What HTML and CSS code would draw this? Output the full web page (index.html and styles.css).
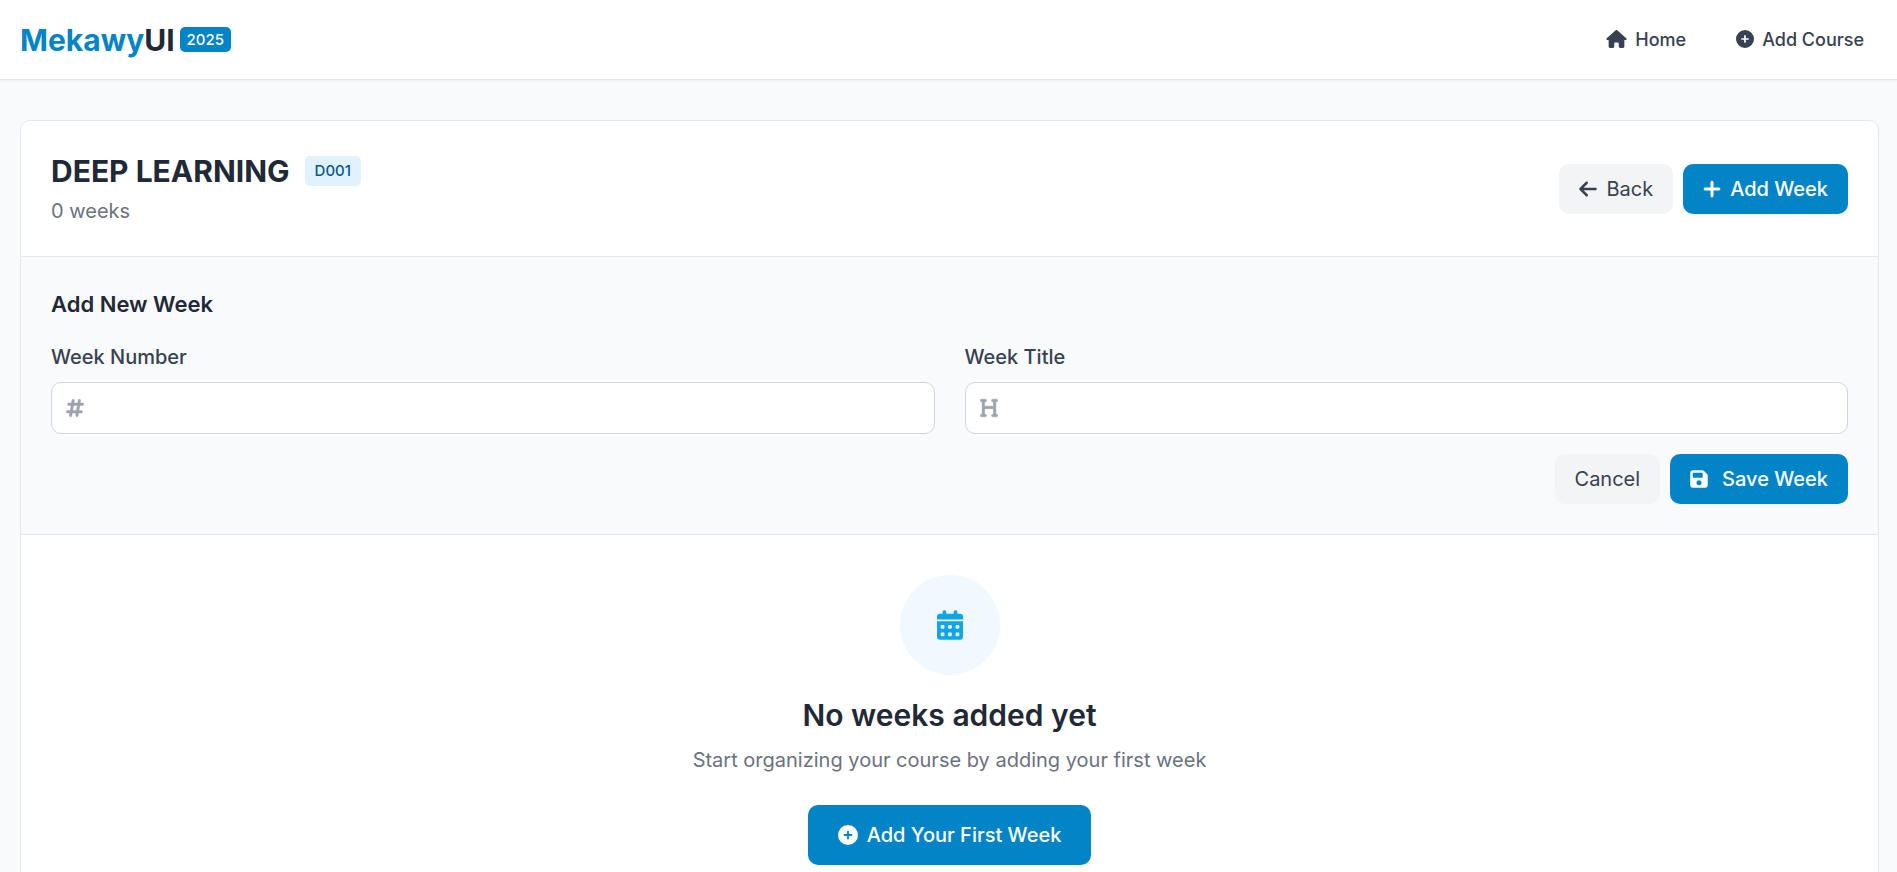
FILE: index.html
```html
<!DOCTYPE html>
<html lang="en">
<head>
<meta charset="utf-8">
<meta name="viewport" content="width=device-width, initial-scale=1">
<title>DEEP LEARNING - MekawyUI</title>
<link rel="stylesheet" href="styles.css">
</head>
<body>
<svg class="sprite" aria-hidden="true">
  <symbol id="i-plus" viewBox="0 0 448 512"><path d="M256 80c0-17.7-14.3-32-32-32s-32 14.3-32 32V224H48c-17.7 0-32 14.3-32 32s14.3 32 32 32H192V432c0 17.7 14.3 32 32 32s32-14.3 32-32V288H400c17.7 0 32-14.3 32-32s-14.3-32-32-32H256V80z" stroke="currentColor" stroke-width="12"/></symbol>
  <symbol id="i-arrow-left" viewBox="0 0 448 512"><path d="M9.4 233.4c-12.5 12.5-12.5 32.8 0 45.3l160 160c12.5 12.5 32.8 12.5 45.3 0s12.5-32.8 0-45.3L109.2 288 416 288c17.7 0 32-14.3 32-32s-14.3-32-32-32l-306.7 0L214.6 118.6c12.5-12.5 12.5-32.8 0-45.3s-32.8-12.5-45.3 0l-160 160z"/></symbol>
  <symbol id="i-circle-plus" viewBox="0 0 512 512"><path d="M256 512A256 256 0 1 0 256 0a256 256 0 1 0 0 512zM232 344V280H168c-13.3 0-24-10.7-24-24s10.7-24 24-24h64V168c0-13.3 10.7-24 24-24s24 10.7 24 24v64h64c13.3 0 24 10.7 24 24s-10.7 24-24 24H280v64c0 13.3-10.7 24-24 24s-24-10.7-24-24z"/></symbol>
  <symbol id="i-house" viewBox="0 0 576 512"><path d="M575.8 255.5c0 18-15 32.1-32 32.1h-32l.7 160.2c0 2.7-.2 5.4-.5 8.1V472c0 22.1-17.9 40-40 40H456c-1.1 0-2.2 0-3.3-.1c-1.4 .1-2.8 .1-4.2 .1H416 392c-22.1 0-40-17.9-40-40V448 384c0-17.7-14.3-32-32-32H256c-17.7 0-32 14.3-32 32v64 24c0 22.1-17.9 40-40 40H160 128.1c-1.5 0-3-.1-4.5-.2c-1.2 .1-2.4 .2-3.6 .2H104c-22.1 0-40-17.9-40-40V360c0-.9 0-1.9 .1-2.8V287.6H32c-18 0-32-14-32-32.1c0-9 3-17 10-24L266.4 8c7-7 15-8 22-8s15 2 21 7L564.8 231.5c8 7 12 15 11 24z"/></symbol>
  <symbol id="i-floppy" viewBox="0 0 448 512"><path d="M64 32C28.7 32 0 60.7 0 96V416c0 35.3 28.7 64 64 64H384c35.3 0 64-28.7 64-64V173.3c0-17-6.7-33.3-18.7-45.3L352 50.7C340 38.7 323.7 32 306.7 32H64zm0 96c0-17.7 14.3-32 32-32H288c17.7 0 32 14.3 32 32v64c0 17.7-14.3 32-32 32H96c-17.7 0-32-14.3-32-32V128zM224 288a64 64 0 1 1 0 128 64 64 0 1 1 0-128z"/></symbol>
  <symbol id="i-hashtag" viewBox="0 0 448 512"><path d="M181.3 32.4c17.4 2.9 29.2 19.4 26.3 36.8L197.8 128h95.1l11.5-69.3c2.9-17.4 19.4-29.2 36.8-26.3s29.2 19.4 26.3 36.8L357.8 128H416c17.7 0 32 14.3 32 32s-14.3 32-32 32H347.1L325.8 320H384c17.7 0 32 14.3 32 32s-14.3 32-32 32H315.1l-11.5 69.3c-2.9 17.4-19.4 29.2-36.8 26.3s-29.2-19.4-26.3-36.8l9.8-58.7H155.1l-11.5 69.3c-2.9 17.4-19.4 29.2-36.8 26.3s-29.2-19.4-26.3-36.8L90.2 384H32c-17.7 0-32-14.3-32-32s14.3-32 32-32h68.9l21.3-128H64c-17.7 0-32-14.3-32-32s14.3-32 32-32h68.9l11.5-69.3c2.9-17.4 19.4-29.2 36.8-26.3zM187.1 192L165.8 320h95.1l21.3-128H187.1z" stroke="currentColor" stroke-width="12"/></symbol>
  <symbol id="i-heading" viewBox="0 0 448 512"><path d="M0 64C0 46.3 14.3 32 32 32H80h48c17.7 0 32 14.3 32 32s-14.3 32-32 32H112V208H336V96H320c-17.7 0-32-14.3-32-32s14.3-32 32-32h48 48c17.7 0 32 14.3 32 32s-14.3 32-32 32H400V240 416h16c17.7 0 32 14.3 32 32s-14.3 32-32 32H368 320c-17.7 0-32-14.3-32-32s14.3-32 32-32h16V272H112V416h16c17.7 0 32 14.3 32 32s-14.3 32-32 32H80 32c-17.7 0-32-14.3-32-32s14.3-32 32-32H48V240 96H32C14.3 96 0 81.7 0 64z" stroke="currentColor" stroke-width="12"/></symbol>
  <symbol id="i-calendar" viewBox="0 0 448 512"><path d="M128 0c17.7 0 32 14.3 32 32V64H288V32c0-17.7 14.3-32 32-32s32 14.3 32 32V64h48c26.5 0 48 21.5 48 48v48H0V112C0 85.5 21.5 64 48 64H96V32c0-17.7 14.3-32 32-32zM0 192H448V464c0 26.5-21.5 48-48 48H48c-26.5 0-48-21.5-48-48V192zm64 80v32c0 8.8 7.2 16 16 16h32c8.8 0 16-7.2 16-16V272c0-8.8-7.2-16-16-16H80c-8.8 0-16 7.2-16 16zm128 0v32c0 8.8 7.2 16 16 16h32c8.8 0 16-7.2 16-16V272c0-8.8-7.2-16-16-16H208c-8.8 0-16 7.2-16 16zm144-16c-8.8 0-16 7.2-16 16v32c0 8.8 7.2 16 16 16h32c8.8 0 16-7.2 16-16V272c0-8.8-7.2-16-16-16H336zM64 400v32c0 8.8 7.2 16 16 16h32c8.8 0 16-7.2 16-16V400c0-8.8-7.2-16-16-16H80c-8.8 0-16 7.2-16 16zm144-16c-8.8 0-16 7.2-16 16v32c0 8.8 7.2 16 16 16h32c8.8 0 16-7.2 16-16V400c0-8.8-7.2-16-16-16H208zm112 16v32c0 8.8 7.2 16 16 16h32c8.8 0 16-7.2 16-16V400c0-8.8-7.2-16-16-16H336c-8.8 0-16 7.2-16 16z"/></symbol>
</svg>

<header class="navbar">
  <a class="brand" href="#">
    <span class="brand-name"><span class="brand-accent">Mekawy</span>UI</span>
    <span class="brand-year">2025</span>
  </a>
  <nav class="nav-links">
    <a class="nav-link" href="#"><svg class="icon-house"><use href="#i-house"/></svg>Home</a>
    <a class="nav-link" href="#"><svg class="icon-circle"><use href="#i-circle-plus"/></svg>Add Course</a>
  </nav>
</header>

<main class="page">
  <div class="card">
    <section class="course-head">
      <div>
        <div class="title-row">
          <h1 class="title">DEEP LEARNING</h1>
          <span class="code">D001</span>
        </div>
        <p class="count">0 weeks</p>
      </div>
      <div class="actions">
        <a class="btn btn-muted" href="#"><svg class="icon"><use href="#i-arrow-left"/></svg>Back</a>
        <button class="btn btn-primary" type="button"><svg class="icon"><use href="#i-plus"/></svg>Add Week</button>
      </div>
    </section>

    <form class="week-form">
      <h2 class="form-title">Add New Week</h2>
      <div class="fields">
        <div class="field">
          <label class="label" for="week-number">Week Number</label>
          <div class="control">
            <svg class="icon control-icon"><use href="#i-hashtag"/></svg>
            <input class="input" id="week-number" type="number">
          </div>
        </div>
        <div class="field">
          <label class="label" for="week-title">Week Title</label>
          <div class="control">
            <svg class="icon control-icon"><use href="#i-heading"/></svg>
            <input class="input" id="week-title" type="text">
          </div>
        </div>
      </div>
      <div class="actions form-actions">
        <button class="btn btn-muted" type="button">Cancel</button>
        <button class="btn btn-primary btn-save" type="submit"><svg class="icon"><use href="#i-floppy"/></svg>Save Week</button>
      </div>
    </form>

    <section class="empty">
      <div class="empty-badge"><svg class="icon-calendar"><use href="#i-calendar"/></svg></div>
      <h2 class="empty-title">No weeks added yet</h2>
      <p class="empty-text">Start organizing your course by adding your first week</p>
      <button class="btn btn-primary btn-large" type="button"><svg class="icon-plus-large"><use href="#i-circle-plus"/></svg>Add Your First Week</button>
    </section>
  </div>
</main>
</body>
</html>
```

FILE: styles.css
```css
* {
  box-sizing: border-box;
}

body {
  margin: 0;
  background: #f9fafb;
  color: #1f2937;
  font-family: Inter, "Liberation Sans", sans-serif;
  font-size: 20px;
  line-height: 30px;
  scrollbar-width: none;
}

h1, h2, p {
  margin: 0;
}

a {
  color: inherit;
  text-decoration: none;
}

svg {
  flex: none;
  fill: currentColor;
}

.sprite {
  position: absolute;
  width: 0;
  height: 0;
}

.icon {
  width: 18px;
  height: 20px;
}

.icon-house {
  width: 21px;
  height: 20px;
  padding-bottom: 2px;
}

.icon-circle {
  width: 18px;
  height: 20px;
  padding-bottom: 2px;
}

.icon-plus-large {
  width: 20px;
  height: 20px;
}

.icon-calendar {
  width: 26px;
  height: 30px;
}

.navbar {
  display: flex;
  align-items: center;
  justify-content: space-between;
  height: 80px;
  padding: 0 18px 0 20px;
  background: #fff;
  border-bottom: 1px solid #e5e7eb;
  box-shadow: 0 1px 2px rgba(0, 0, 0, 0.05);
}

.brand {
  display: flex;
  align-items: center;
  gap: 5px;
}

.brand-name {
  font-size: 30px;
  font-weight: 700;
  line-height: 40px;
}

.brand-accent {
  color: #0284c7;
}

.brand-year {
  padding: 2px 7px;
  border-radius: 5px;
  background: #0284c7;
  color: #fff;
  font-size: 15px;
  font-weight: 500;
  line-height: 21px;
}

.nav-links {
  display: flex;
  gap: 20px;
}

.nav-link {
  display: flex;
  align-items: center;
  gap: 8px;
  padding: 10px 15px;
  color: #374151;
  font-size: 18px;
  font-weight: 500;
  line-height: 25px;
}

.page {
  padding: 40px 18px 40px 20px;
}

.card {
  overflow: hidden;
  background: #fff;
  border: 1px solid #e5e7eb;
  border-radius: 10px;
}

.course-head {
  display: flex;
  align-items: center;
  justify-content: space-between;
  padding: 30px;
  border-bottom: 1px solid #e5e7eb;
}

.title-row {
  display: flex;
  align-items: center;
  gap: 15px;
}

.title {
  font-size: 30px;
  font-weight: 700;
  line-height: 40px;
}

.code {
  padding: 5px 10px;
  border-radius: 5px;
  background: #e0f2fe;
  color: #075985;
  font-size: 15px;
  font-weight: 500;
  line-height: 20px;
}

.count {
  margin-top: 5px;
  color: #6b7280;
}

.actions {
  display: flex;
  gap: 10px;
}

.btn {
  display: inline-flex;
  align-items: center;
  gap: 9px;
  padding: 10px 20px;
  border: 0;
  border-radius: 10px;
  font: inherit;
  cursor: pointer;
}

.btn-muted {
  background: #f3f4f6;
  color: #374151;
}

.btn-primary {
  background: #0284c7;
  color: #fff;
  font-weight: 500;
}

.btn-save {
  gap: 14px;
}

.btn-large {
  padding: 15px 30px;
}

.week-form {
  padding: 30px;
  background: #f9fafb;
  border-bottom: 1px solid #e5e7eb;
}

.form-title {
  margin-bottom: 20px;
  font-size: 22px;
  font-weight: 600;
  line-height: 35px;
}

.fields {
  display: grid;
  grid-template-columns: 1fr 1fr;
  gap: 30px;
}

.label {
  display: block;
  margin-bottom: 10px;
  color: #374151;
  font-weight: 500;
}

.control {
  position: relative;
}

.control-icon {
  position: absolute;
  top: 16px;
  left: 15px;
  color: #9ca3af;
}

.input {
  display: block;
  width: 100%;
  height: 52px;
  padding: 10px 15px 10px 50px;
  border: 1px solid #d1d5db;
  border-radius: 10px;
  background: #fff;
  color: inherit;
  font: inherit;
}

.form-actions {
  justify-content: flex-end;
  margin-top: 20px;
}

.empty {
  display: flex;
  flex-direction: column;
  align-items: center;
  padding: 40px 30px;
  text-align: center;
}

.empty-badge {
  display: grid;
  place-items: center;
  width: 100px;
  height: 100px;
  margin-bottom: 20px;
  border-radius: 50%;
  background: #f0f9ff;
  color: #0ea5e9;
}

.empty-title {
  margin-bottom: 10px;
  font-size: 30px;
  font-weight: 600;
  line-height: 40px;
}

.empty-text {
  margin-bottom: 30px;
  color: #6b7280;
}
```
